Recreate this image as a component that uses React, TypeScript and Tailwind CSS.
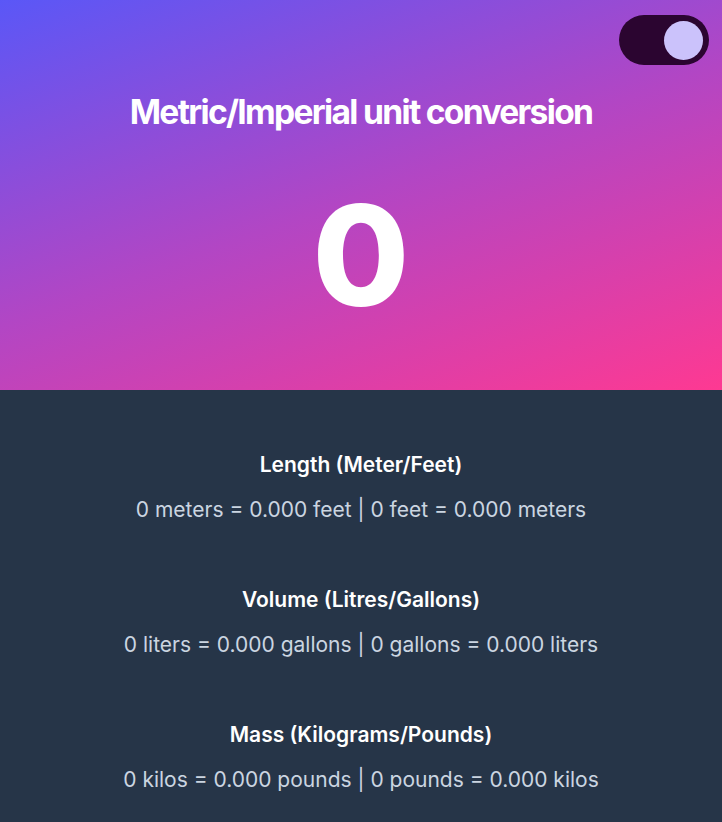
const rows = [
  { title: 'Length (Meter/Feet)', text: '0 meters = 0.000 feet', back: '0 feet = 0.000 meters' },
  { title: 'Volume (Litres/Gallons)', text: '0 liters = 0.000 gallons', back: '0 gallons = 0.000 liters' },
  { title: 'Mass (Kilograms/Pounds)', text: '0 kilos = 0.000 pounds', back: '0 pounds = 0.000 kilos' },
]

export default function App() {
  return (
    <div className="min-h-screen bg-[#263548] font-['Inter',sans-serif]">
      <header className="relative h-[390px] bg-[linear-gradient(160deg,#5a57f7_0%,#b246c4_50%,#fe3992_100%)] flex flex-col items-center">
        <button
          type="button"
          className="absolute right-[13px] top-[15px] w-[90px] h-[50px] rounded-full bg-[#2b0530] flex items-center justify-end pr-[6px]"
        >
          <span className="block w-[39px] h-[39px] rounded-full bg-[#cbc2fb]" />
        </button>
        <h1 className="mt-[91px] text-[33.6px] font-bold tracking-[-0.05em] text-white leading-tight">
          Metric/Imperial unit conversion
        </h1>
        <p className="mt-[52px] text-[140px] font-extrabold text-white leading-none">0</p>
      </header>
      <main className="flex flex-col items-center pt-[61px] gap-[62px]">
        {rows.map((r) => (
          <section key={r.title} className="flex flex-col items-center">
            <h2 className="text-[21px] font-semibold text-white leading-[28px]">{r.title}</h2>
            <p className="mt-[17px] text-[21px] text-[#cbd5e1] leading-[28px]">
              {r.text} | {r.back}
            </p>
          </section>
        ))}
      </main>
    </div>
  )
}
